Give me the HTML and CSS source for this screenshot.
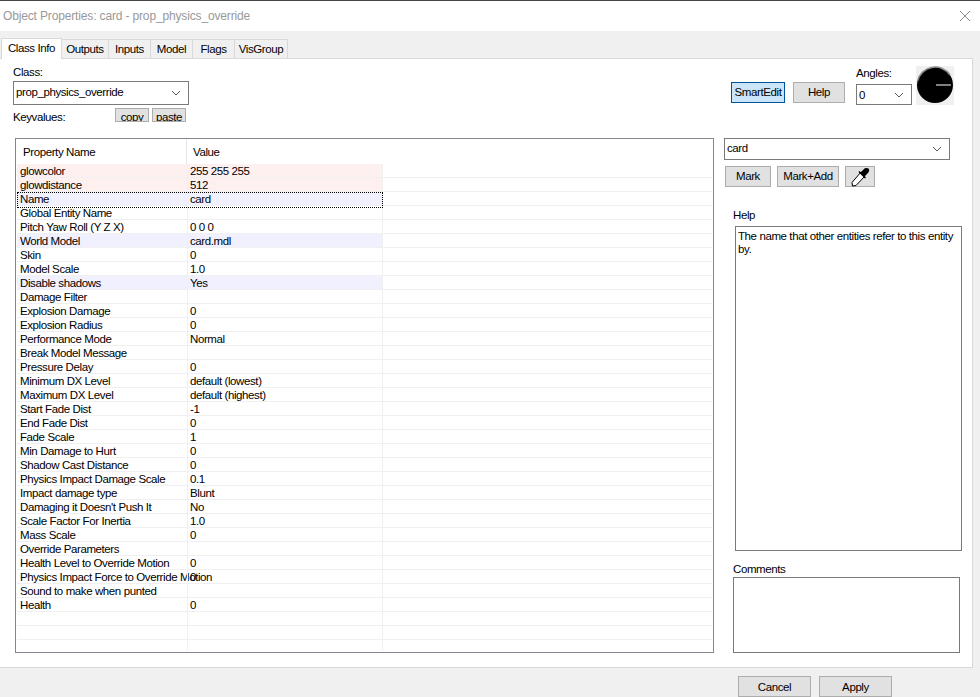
FILE: index.html
```html
<!DOCTYPE html>
<html lang="en">

<head>
    <meta charset="UTF-8">
    <meta name="viewport" content="width=device-width, initial-scale=1.0">
    <title>Object Properties</title>
    <link rel="stylesheet" href="styles.css">
</head>

<body>
    <div class="topline"></div>
    <div class="titlebar">
        <span class="title">Object Properties: card - prop_physics_override</span>
        <svg class="close" width="12" height="12" viewBox="0 0 12 12">
            <path d="M1 1L11 11M11 1L1 11" stroke="#8a8a8a" stroke-width="1" fill="none" />
        </svg>
    </div>
    <div class="tabs">
        <div class="tab active">Class Info</div>
        <div class="tab w-outputs">Outputs</div>
        <div class="tab w-inputs">Inputs</div>
        <div class="tab w-model">Model</div>
        <div class="tab w-flags">Flags</div>
        <div class="tab w-visgroup">VisGroup</div>
    </div>
    <div class="panel">
        <div class="top-row">
            <div class="class-box">
                <div class="label">Class:</div>
                <div class="select class-select">
                    <span>prop_physics_override</span>
                    <svg class="chev" width="10" height="6" viewBox="0 0 10 6"><path d="M1 1L5 5L9 1" stroke="#555" fill="none" /></svg>
                </div>
                <div class="keyvalues">
                    <span class="label">Keyvalues:</span>
                    <div class="btn mini first">copy</div>
                    <div class="btn mini">paste</div>
                </div>
            </div>
            <div class="tools">
                <div class="btn smart">SmartEdit</div>
                <div class="btn help-btn">Help</div>
                <div class="angles">
                    <div class="label">Angles:</div>
                    <div class="select angle-select">
                        <span>0</span>
                        <svg class="chev" width="10" height="6" viewBox="0 0 10 6"><path d="M1 1L5 5L9 1" stroke="#555" fill="none" /></svg>
                    </div>
                </div>
                <div class="dial">
                    <svg width="38" height="39" viewBox="0 0 38 39">
                        <circle cx="19" cy="19" r="18" fill="#000" />
                        <path d="M1.6 15A18 18 0 0 1 34 9" stroke="#8c8c8c" stroke-width="1.5" fill="none" />
                        <path d="M20 19H35" stroke="#fff" stroke-width="1" fill="none" />
                    </svg>
                </div>
            </div>
        </div>
        <div class="main-row">
            <div class="grid-box">
                <div class="grid-head">
                    <div class="c1">Property Name</div>
                    <div class="c2">Value</div>
                </div>
                <div class="row pink"><div class="c1">glowcolor</div><div class="c2">255 255 255</div><div class="c3"></div></div>
                <div class="row pink"><div class="c1">glowdistance</div><div class="c2">512</div><div class="c3"></div></div>
                <div class="row focus"><div class="c1">Name</div><div class="c2">card</div><div class="c3"></div></div>
                <div class="row"><div class="c1">Global Entity Name</div><div class="c2"></div><div class="c3"></div></div>
                <div class="row"><div class="c1">Pitch Yaw Roll (Y Z X)</div><div class="c2">0 0 0</div><div class="c3"></div></div>
                <div class="row blue"><div class="c1">World Model</div><div class="c2">card.mdl</div><div class="c3"></div></div>
                <div class="row"><div class="c1">Skin</div><div class="c2">0</div><div class="c3"></div></div>
                <div class="row"><div class="c1">Model Scale</div><div class="c2">1.0</div><div class="c3"></div></div>
                <div class="row blue"><div class="c1">Disable shadows</div><div class="c2">Yes</div><div class="c3"></div></div>
                <div class="row"><div class="c1">Damage Filter</div><div class="c2"></div><div class="c3"></div></div>
                <div class="row"><div class="c1">Explosion Damage</div><div class="c2">0</div><div class="c3"></div></div>
                <div class="row"><div class="c1">Explosion Radius</div><div class="c2">0</div><div class="c3"></div></div>
                <div class="row"><div class="c1">Performance Mode</div><div class="c2">Normal</div><div class="c3"></div></div>
                <div class="row"><div class="c1">Break Model Message</div><div class="c2"></div><div class="c3"></div></div>
                <div class="row"><div class="c1">Pressure Delay</div><div class="c2">0</div><div class="c3"></div></div>
                <div class="row"><div class="c1">Minimum DX Level</div><div class="c2">default (lowest)</div><div class="c3"></div></div>
                <div class="row"><div class="c1">Maximum DX Level</div><div class="c2">default (highest)</div><div class="c3"></div></div>
                <div class="row"><div class="c1">Start Fade Dist</div><div class="c2">-1</div><div class="c3"></div></div>
                <div class="row"><div class="c1">End Fade Dist</div><div class="c2">0</div><div class="c3"></div></div>
                <div class="row"><div class="c1">Fade Scale</div><div class="c2">1</div><div class="c3"></div></div>
                <div class="row"><div class="c1">Min Damage to Hurt</div><div class="c2">0</div><div class="c3"></div></div>
                <div class="row"><div class="c1">Shadow Cast Distance</div><div class="c2">0</div><div class="c3"></div></div>
                <div class="row"><div class="c1">Physics Impact Damage Scale</div><div class="c2">0.1</div><div class="c3"></div></div>
                <div class="row"><div class="c1">Impact damage type</div><div class="c2">Blunt</div><div class="c3"></div></div>
                <div class="row"><div class="c1">Damaging it Doesn't Push It</div><div class="c2">No</div><div class="c3"></div></div>
                <div class="row"><div class="c1">Scale Factor For Inertia</div><div class="c2">1.0</div><div class="c3"></div></div>
                <div class="row"><div class="c1">Mass Scale</div><div class="c2">0</div><div class="c3"></div></div>
                <div class="row"><div class="c1">Override Parameters</div><div class="c2"></div><div class="c3"></div></div>
                <div class="row"><div class="c1">Health Level to Override Motion</div><div class="c2">0</div><div class="c3"></div></div>
                <div class="row"><div class="c1">Physics Impact Force to Override Motion</div><div class="c2">0</div><div class="c3"></div></div>
                <div class="row"><div class="c1">Sound to make when punted</div><div class="c2"></div><div class="c3"></div></div>
                <div class="row"><div class="c1">Health</div><div class="c2">0</div><div class="c3"></div></div>
                <div class="row"><div class="c1"></div><div class="c2"></div><div class="c3"></div></div>
                <div class="row"><div class="c1"></div><div class="c2"></div><div class="c3"></div></div>
                <div class="row last"><div class="c1"></div><div class="c2"></div><div class="c3"></div></div>
            </div>
            <div class="side">
                <div class="select card-select">
                    <span>card</span>
                    <svg class="chev" width="10" height="6" viewBox="0 0 10 6"><path d="M1 1L5 5L9 1" stroke="#555" fill="none" /></svg>
                </div>
                <div class="mark-row">
                    <div class="btn mark">Mark</div>
                    <div class="btn mark-add">Mark+Add</div>
                    <div class="btn picker">
                        <svg width="20" height="20" viewBox="0 0 20 20">
                            <path d="M11 5L15 9L6 18.5L2.5 19L2 15.5Z" fill="#fff" stroke="#000" stroke-width="1" />
                            <path d="M10 6L14 2C15 1 17 0.5 18.5 1.5C19.8 3 19 5 18 6L14 10Z" fill="#000" />
                            <path d="M9 4.5L15.5 11" stroke="#000" stroke-width="1.5" />
                        </svg>
                    </div>
                </div>
                <div class="label help-label">Help</div>
                <div class="textbox help-box">The name that other entities refer to this entity by.</div>
                <div class="label comments-label">Comments</div>
                <div class="textbox comments-box"></div>
            </div>
        </div>
    </div>
    <div class="footer">
        <div class="btn foot">Cancel</div>
        <div class="btn foot">Apply</div>
    </div>
</body>

</html>
```

FILE: styles.css
```css
* {
    margin: 0;
    padding: 0;
    box-sizing: border-box;
}

html,
body {
    height: 697px;
    overflow: hidden;
}

body {
    background-color: #f0f0f0;
    font-family: "Liberation Sans", sans-serif;
    font-size: 11.5px;
    letter-spacing: -0.4px;
    color: #000;
}

.topline {
    height: 1px;
    background-color: #444;
}

.titlebar {
    height: 30px;
    background-color: #fff;
    display: flex;
    align-items: center;
    justify-content: space-between;
    padding: 0 9px 0 3px;
}

.title {
    color: #999;
    font-size: 12px;
    letter-spacing: -0.15px;
}

/* tabs */
.tabs {
    display: flex;
    align-items: flex-end;
    height: 27px;
    padding-left: 1px;
}

.tab {
    height: 19px;
    line-height: 18px;
    text-align: center;
    background-color: #f0f0f0;
    border: 1px solid #d9d9d9;
    border-left: 0;
    border-bottom: 0;
}

.tab.active {
    width: 61px;
    height: 21px;
    background-color: #fff;
    border: 1px solid #d9d9d9;
    border-bottom: 0;
    margin-bottom: -1px;
    position: relative;
}

.w-outputs {
    width: 47px;
}

.w-inputs {
    width: 42px;
}

.w-model {
    width: 42px;
}

.w-flags {
    width: 42px;
}

.w-visgroup {
    width: 53px;
}

/* main panel */
.panel {
    width: 973px;
    height: 610px;
    background-color: #fff;
    border: 1px solid #d9d9d9;
    border-left: 0;
    padding: 0 0 0 15px;
}

.top-row {
    display: flex;
    height: 79px;
}

.class-box {
    margin-left: -2px;
    padding-top: 6px;
    width: 718px;
}

.label {
    line-height: 14px;
}

.select {
    display: flex;
    align-items: center;
    justify-content: space-between;
    background-color: #fff;
    border: 1px solid #7a7a7a;
    padding: 0 7px 0 2px;
}

.class-select {
    width: 176px;
    height: 24px;
    margin-top: 2px;
    padding-bottom: 3px;
}

.class-select .chev {
    margin-top: 3px;
}

.keyvalues {
    display: flex;
    align-items: flex-start;
    margin-top: 3px;
}

.keyvalues .label {
    margin-top: 2px;
    width: 102px;
}

.btn {
    background-color: #e1e1e1;
    border: 1px solid #adadad;
    text-align: center;
}

.mini {
    width: 34px;
    height: 14px;
    line-height: 16px;
    overflow: hidden;
}

.mini.first {
    margin-right: 3px;
}

.tools {
    display: flex;
    align-items: flex-start;
}

.smart {
    width: 54px;
    height: 21px;
    line-height: 19px;
    margin-top: 23px;
    background-color: #cce4f7;
    border-color: #005499;
}

.help-btn {
    width: 52px;
    height: 21px;
    line-height: 19px;
    margin: 23px 0 0 8px;
}

.angles {
    margin: 7px 0 0 11px;
    width: 60px;
}

.angle-select {
    width: 56px;
    height: 21px;
    margin-top: 4px;
}

.dial {
    width: 38px;
    height: 39px;
    margin-top: 7px;
    background-color: #f0f0f0;
}

.chev {
    flex-shrink: 0;
}

/* property grid */
.main-row {
    display: flex;
}

.grid-box {
    width: 699px;
    height: 515px;
    border: 1px solid #828790;
    padding: 0 1px;
}

.grid-head {
    display: flex;
    height: 25px;
    line-height: 26px;
}

.grid-head .c1 {
    width: 170px;
    padding-left: 6px;
    border-right: 1px solid #e5e5e5;
}

.grid-head .c2 {
    padding-left: 6px;
}

.row {
    display: flex;
    height: 14px;
    line-height: 15px;
    border-bottom: 1px solid #f0f0f0;
}

.row.last {
    height: 11px;
    border-bottom: 0;
}

.row .c1 {
    width: 170px;
    padding-left: 3px;
    white-space: nowrap;
}

.row .c2 {
    width: 196px;
    padding-left: 2px;
    border-left: 1px solid #f0f0f0;
    border-right: 1px solid #f0f0f0;
}

.row .c3 {
    flex: 1;
}

.pink .c1,
.pink .c2 {
    background-color: #fff0f0;
}

.blue .c1,
.blue .c2 {
    background-color: #f0f0ff;
}

.focus {
    position: relative;
}

.focus .c1,
.focus .c2 {
    background-color: #f0f0ff;
}

.focus::after {
    content: "";
    position: absolute;
    left: 0;
    top: 0;
    width: 364px;
    height: 14px;
    border: 1px dotted #000;
}

/* right side */
.side {
    margin-left: 10px;
    width: 238px;
    position: relative;
}

.card-select {
    width: 226px;
    height: 22px;
    padding-bottom: 2px;
}

.card-select .chev {
    margin-top: 2px;
}

.mark-row {
    display: flex;
    margin: 6px 0 0 1px;
}

.mark-row .btn {
    height: 21px;
    line-height: 19px;
}

.mark {
    width: 46px;
}

.mark-add {
    width: 62px;
    margin-left: 6px;
}

.picker {
    width: 30px;
    margin-left: 6px;
    display: flex;
    align-items: center;
    justify-content: center;
}

.help-label {
    margin: 21px 0 0 9px;
}

.textbox {
    background-color: #fff;
    border: 1px solid #7a7a7a;
}

.help-box {
    width: 227px;
    height: 325px;
    margin: 4px 0 0 11px;
    padding: 3px 2px;
    line-height: 13px;
}

.comments-label {
    margin: 11px 0 0 9px;
}

.comments-box {
    width: 227px;
    height: 76px;
    margin: 1px 0 0 9px;
}

/* bottom buttons */
.footer {
    display: flex;
    justify-content: flex-end;
    gap: 8px;
    padding: 8px 88px 0 0;
}

.foot {
    width: 73px;
    height: 21px;
    line-height: 21px;
}
```
